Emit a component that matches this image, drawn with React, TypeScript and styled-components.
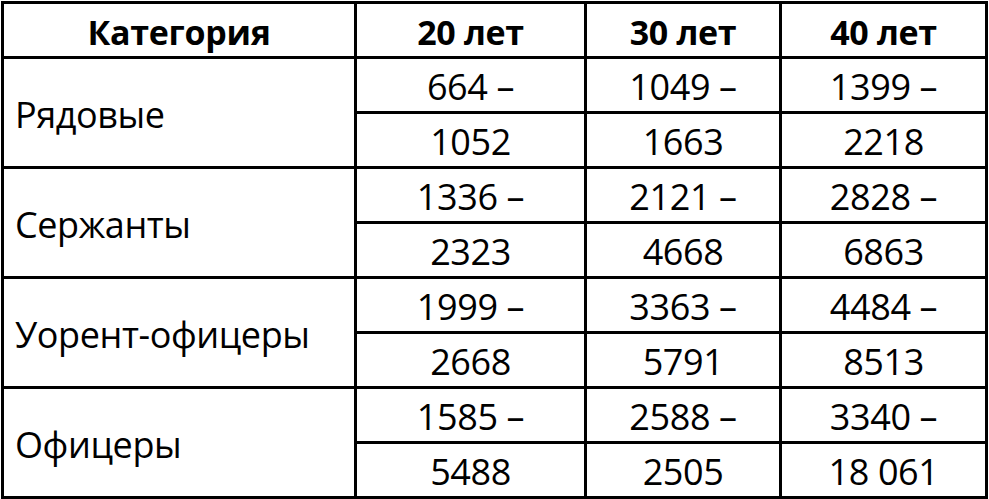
import React from "react";
import styled, { createGlobalStyle } from "styled-components";

const GlobalStyle = createGlobalStyle`
  html, body { margin: 0; padding: 0; background: #ffffff; }
  body { font-family: "Open Sans", "Liberation Sans", sans-serif; color: #000; }
`;

const Grid = styled.div`
  margin: 1px 0 0 1px;
  display: grid;
  grid-template-columns: 353px 230px 195px 206px;
  grid-auto-rows: 55px;
  width: max-content;
  border-top: 3px solid #000;
  border-left: 3px solid #000;
  box-sizing: content-box;
`;

const Cell = styled.div<{ $head?: boolean; $span?: boolean; $left?: boolean }>`
  box-sizing: border-box;
  border-right: 3px solid #000;
  border-bottom: 3px solid #000;
  display: flex;
  align-items: center;
  justify-content: ${(p) => (p.$left ? "flex-start" : "center")};
  padding: ${(p) => (p.$left ? "0 0 0 11px" : "0")};
  padding-top: ${(p) => (p.$left ? "5px" : "3px")};
  font-size: ${(p) => (p.$head ? "34px" : "36px")};
  font-weight: ${(p) => (p.$head ? 700 : 400)};
  letter-spacing: ${(p) => (p.$head ? "-0.3px" : "-0.4px")};
  line-height: 1;
  white-space: nowrap;
  grid-row: ${(p) => (p.$span ? "span 2" : "auto")};
`;

const headers = ["Категория", "20 лет", "30 лет", "40 лет"];

const rows: { name: string; top: string[]; bottom: string[] }[] = [
  { name: "Рядовые", top: ["664 –", "1049 –", "1399 –"], bottom: ["1052", "1663", "2218"] },
  { name: "Сержанты", top: ["1336 –", "2121 –", "2828 –"], bottom: ["2323", "4668", "6863"] },
  { name: "Уорент-офицеры", top: ["1999 –", "3363 –", "4484 –"], bottom: ["2668", "5791", "8513"] },
  { name: "Офицеры", top: ["1585 –", "2588 –", "3340 –"], bottom: ["5488", "2505", "18 061"] },
];

export default function App() {
  return (
    <>
      <GlobalStyle />
      <Grid>
        {headers.map((h) => (
          <Cell key={h} $head>
            {h}
          </Cell>
        ))}
        {rows.map((r) => (
          <React.Fragment key={r.name}>
            <Cell $span $left>
              {r.name}
            </Cell>
            {r.top.map((v, i) => (
              <Cell key={"t" + i}>{v}</Cell>
            ))}
            {r.bottom.map((v, i) => (
              <Cell key={"b" + i}>{v}</Cell>
            ))}
          </React.Fragment>
        ))}
      </Grid>
    </>
  );
}
